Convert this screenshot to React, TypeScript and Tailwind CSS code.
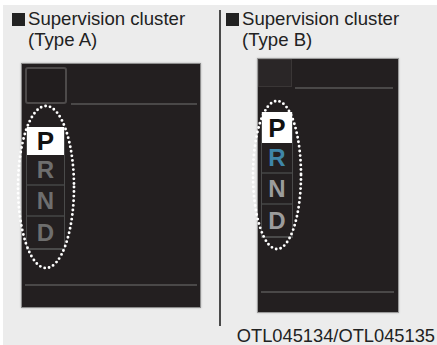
const font = { fontFamily: '"Liberation Sans", Arial, sans-serif' }

interface GearProps {
  pHeight: number
  segHeight: number
  rColor: string
  ndColor: string
  width: number
}

const Gears = ({ pHeight, segHeight, rColor, ndColor, width }: GearProps) => {
  const rest = [
    { l: 'R', c: rColor },
    { l: 'N', c: ndColor },
    { l: 'D', c: ndColor },
  ]
  return (
    <div className="flex flex-col border-x border-b-2 border-[#4a4a4a]" style={{ width }}>
      <div
        className="flex items-center justify-center bg-white text-[26px] font-bold leading-none text-[#111]"
        style={{ height: pHeight }}
      >
        P
      </div>
      {rest.map((g, i) => (
        <div
          key={g.l}
          className={`flex items-center justify-center text-[24px] font-bold leading-none ${i < 2 ? 'border-b-2 border-[#3c3c3c]' : ''}`}
          style={{ height: segHeight, color: g.c }}
        >
          {g.l}
        </div>
      ))}
    </div>
  )
}

const DottedEllipse = ({ cx, cy, rx, ry }: { cx: number; cy: number; rx: number; ry: number }) => (
  <svg
    className="pointer-events-none absolute overflow-visible"
    style={{ left: 0, top: 0 }}
    width="1"
    height="1"
  >
    <ellipse
      cx={cx}
      cy={cy}
      rx={rx}
      ry={ry}
      fill="none"
      stroke="#fff"
      strokeWidth="2.9"
      strokeLinecap="round"
      strokeDasharray="0 4.6"
    />
  </svg>
)

const Title = ({ type, pad }: { type: string; pad: string }) => (
  <div className={`flex items-start text-[18.6px] leading-[21px] text-[#222] ${pad}`}>
    <span className="mt-[5px] mr-[3px] inline-block h-[13px] w-[13px] shrink-0 bg-[#222]" />
    <span>
      Supervision cluster
      <br />
      (Type {type})
    </span>
  </div>
)

export default function App() {
  return (
    <div className="h-[345px] w-[437px] overflow-hidden bg-white pl-[3px] pt-[5px]" style={font}>
      <div className="flex h-full flex-col bg-[#ececec]">
        <div className="flex h-[321px] pt-[3px]">
          {/* Type A */}
          <div className="flex w-[216px] flex-col">
            <Title type="A" pad="pl-[9px]" />
            <div className="relative ml-[18px] mt-[13px] flex h-[245px] w-[180px] flex-col border border-[#8c8c8c] bg-[#231f20] shadow-[0_0_2px_rgba(0,0,0,0.25)]">
              <div className="flex items-end pl-[3px] pt-[3px]">
                <div className="h-[37px] w-[42px] rounded-[3px] border-2 border-[#4d4a4a] bg-[#211d1e]" />
                <div className="mb-[-1px] ml-[4px] h-[2px] w-[126px] bg-[#4a4848]" />
              </div>
              <div className="ml-[4px] mt-[23px]">
                <Gears pHeight={28} segHeight={31} rColor="#6e6e6e" ndColor="#6e6e6e" width={39} />
              </div>
              <div className="ml-[3px] mt-[34px] h-[2px] w-[172px] bg-[#4a4848]" />
              <DottedEllipse cx={24} cy={123} rx={28} ry={81} />
            </div>
          </div>

          {/* divider */}
          <div className="mt-[2px] h-[316px] w-[2px] bg-[#4a4a4a]" />

          {/* Type B */}
          <div className="flex flex-1 flex-col">
            <Title type="B" pad="pl-[5px]" />
            <div className="relative ml-[36px] mt-[8px] flex h-[255px] w-[142px] flex-col border border-[#9a9a9a] bg-[#231f20] shadow-[0_0_2px_rgba(0,0,0,0.2)]">
              <div className="flex items-end">
                <div className="h-[28px] w-[34px] border border-[#3a3636] bg-[#2a2627]" />
                <div className="mb-[-2px] ml-[3px] h-[2px] w-[98px] bg-[#4a4848]" />
              </div>
              <div className="ml-[3px] mt-[25px]">
                <Gears pHeight={31} segHeight={31} rColor="#3f86a8" ndColor="#9c9c9c" width={32} />
              </div>
              <div className="ml-[3px] mt-[53px] h-[2px] w-[133px] bg-[#4a4848]" />
              <DottedEllipse cx={19} cy={116} rx={24} ry={74} />
            </div>
          </div>
        </div>
        <div className="pr-[2px] text-right text-[18.3px] leading-[20px] text-[#222]">OTL045134/OTL045135</div>
      </div>
    </div>
  )
}
